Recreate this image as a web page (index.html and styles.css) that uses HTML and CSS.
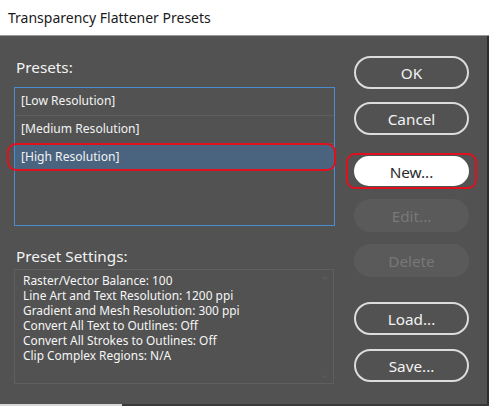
FILE: index.html
```html
<!DOCTYPE html>
<html>
<head>
<meta charset="utf-8">
<link rel="stylesheet" href="styles.css">
</head>
<body>
<div class="window">
  <div class="titlebar">Transparency Flattener Presets</div>
  <div class="dialog">
    <div class="left">
      <div class="label presets-label">Presets:</div>
      <div class="listbox">
        <div class="row sep">[Low Resolution]</div>
        <div class="row sep">[Medium Resolution]</div>
        <div class="row selected">[High Resolution]</div>
        <div class="highlight-row"></div>
      </div>
      <div class="label settings-label">Preset Settings:</div>
      <div class="settings">
        <div>Raster/Vector Balance: 100</div>
        <div>Line Art and Text Resolution: 1200 ppi</div>
        <div>Gradient and Mesh Resolution: 300 ppi</div>
        <div>Convert All Text to Outlines: Off</div>
        <div>Convert All Strokes to Outlines: Off</div>
        <div>Clip Complex Regions: N/A</div>
        <span class="scroll up">&#8963;</span>
        <span class="scroll down">&#8964;</span>
      </div>
    </div>
    <div class="right">
      <button class="btn ok">OK</button>
      <button class="btn cancel">Cancel</button>
      <div class="new-wrap">
        <button class="btn primary">New...</button>
        <div class="highlight-btn"></div>
      </div>
      <button class="btn disabled edit">Edit...</button>
      <button class="btn disabled delete">Delete</button>
      <button class="btn load">Load...</button>
      <button class="btn save">Save...</button>
    </div>
  </div>
  <div class="bottom-strip"></div>
</div>
</body>
</html>
```

FILE: styles.css
```css
* { box-sizing: border-box; }
html, body {
  margin: 0;
  padding: 0;
  width: 489px;
  height: 406px;
  overflow: hidden;
  background: #ffffff;
  font-family: "Noto Sans", "Open Sans", sans-serif;
}
.window {
  width: 489px;
  height: 406px;
  display: flex;
  flex-direction: column;
}
.titlebar {
  height: 36px;
  background: #ffffff;
  color: #1a1a1a;
  font-size: 14px;
  line-height: 36px;
  padding-left: 8px;
  border-bottom: 1px solid #9a9a9a;
}
.dialog {
  height: 368px;
  background: #525252;
  display: flex;
  border-right: 2px solid #2e2e2e;
}
.left {
  width: 340px;
  padding-left: 14px;
  display: flex;
  flex-direction: column;
}
.label {
  color: #f2f2f2;
  font-size: 15.3px;
  line-height: 20px;
  padding-left: 2px;
}
.presets-label { margin-top: 21px; }
.listbox {
  position: relative;
  margin-top: 10px;
  width: 321px;
  height: 139px;
  border: 1px solid #4a8cd0;
}
.row {
  height: 28px;
  line-height: 26px;
  color: #f2f2f2;
  font-size: 12.1px;
  padding-left: 6px;
}
.row.sep { border-bottom: 1px solid #5e5e5e; }
.row.selected {
  background: #4a6480;
  margin: 1px 0;
  height: 25px;
  line-height: 24px;
}
.highlight-row {
  position: absolute;
  left: -8px;
  top: 55px;
  width: 329px;
  height: 28px;
  border: 2.5px solid #e0101c;
  border-radius: 9px;
}
.settings-label { margin-top: 20px; }
.settings {
  position: relative;
  margin-top: 3px;
  width: 320px;
  height: 115px;
  border: 1px solid #5f5f5f;
  padding: 3px 0 0 8px;
  color: #f6f6f6;
  font-size: 11.9px;
  line-height: 15px;
}
.scroll {
  position: absolute;
  right: 4px;
  color: #5f5f5f;
  font-size: 11px;
  line-height: 10px;
}
.scroll.up { top: 6px; }
.scroll.down { bottom: 4px; }
.right {
  display: flex;
  flex-direction: column;
  padding-top: 20px;
  padding-left: 14px;
}
.btn {
  display: block;
  width: 115px;
  height: 33px;
  border-radius: 17px;
  border: 2px solid #dcdcdc;
  background: transparent;
  color: #f2f2f2;
  font-family: "Noto Sans", "Open Sans", sans-serif;
  font-size: 15.3px;
  padding: 0;
  line-height: 28px;
}
.cancel { margin-top: 13px; }
.new-wrap {
  position: relative;
  margin-top: 19px;
}
.btn.primary {
  background: #ffffff;
  border-color: #ffffff;
  color: #2a2a2a;
  height: 30px;
  margin-top: 2px;
}
.highlight-btn {
  position: absolute;
  left: -8px;
  top: -1px;
  width: 131px;
  height: 36px;
  border: 2.5px solid #e0101c;
  border-radius: 9px;
}
.btn.disabled {
  background: #5a5a5a;
  border-color: #5a5a5a;
  color: #787878;
}
.edit { margin-top: 13px; }
.delete { margin-top: 12px; }
.load { margin-top: 25px; }
.save { margin-top: 14px; }
.bottom-strip {
  flex: 1;
  background: linear-gradient(to right, #d8d8d8 0, #d8d8d8 122px, #3a3a3a 122px);
}
```
